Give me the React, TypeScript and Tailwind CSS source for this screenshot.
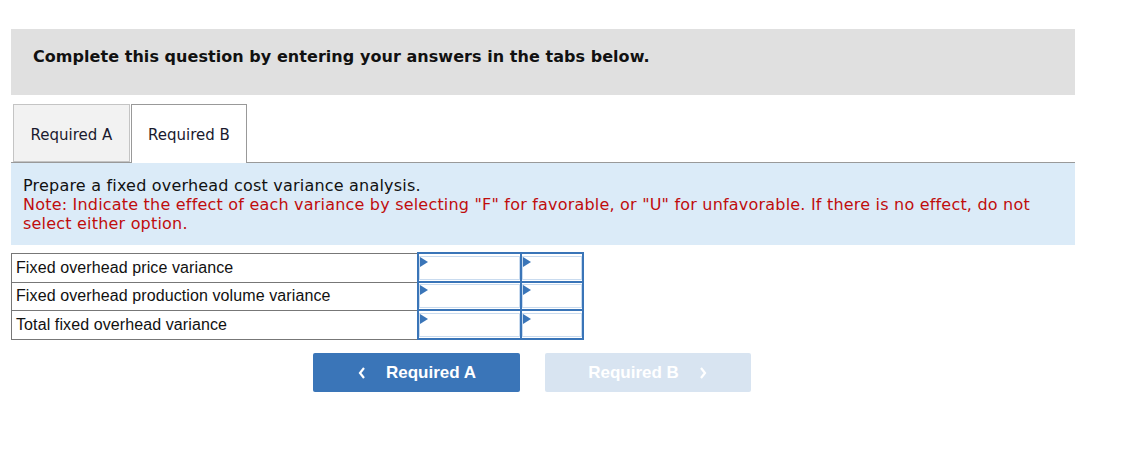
import React from 'react';

const rows = [
  'Fixed overhead price variance',
  'Fixed overhead production volume variance',
  'Total fixed overhead variance',
];

function Flag() {
  return (
    <svg className="absolute left-0 top-0" width="8" height="10" viewBox="0 0 8 10">
      <path d="M0 0 L8 5 L0 10 Z" fill="#3a75b8" />
    </svg>
  );
}

function InputCell({ width }: { width: string }) {
  return (
    <td className={`${width} p-0 border-2 border-[#3a75b8]`}>
      <div className="relative h-[24px] border border-[#c9dbef] bg-white">
        <Flag />
      </div>
    </td>
  );
}

export default function App() {
  return (
    <div className="bg-white min-h-[472px] pt-[29px] pl-[11px]" style={{ fontFamily: '"DejaVu Sans", Verdana, sans-serif' }}>
      <div className="w-[1064px]">
        <div className="h-[66px] bg-[#e0e0e0] pt-[18px] pl-[22px] text-[16px] leading-[19px] font-bold text-[#111] tracking-[0.05px]">
          Complete this question by entering your answers in the tabs below.
        </div>

        <div className="mt-[9px] flex items-end pl-[2px] border-b border-[#999]">
          <div className="w-[117px] h-[58px] bg-[#f2f2f2] border border-[#c4c4c4] flex items-center justify-center text-[15px] text-[#1a1a2e] pt-[4px]">
            Required A
          </div>
          <div className="ml-[1px] -mb-px w-[116px] h-[59px] bg-white border border-b-0 border-[#999] flex items-center justify-center text-[15px] text-[#1a1a2e] pt-[2px]">
            Required B
          </div>
        </div>

        <div className="bg-[#dbebf8] px-[12px] pt-[13px] pb-[12px] text-[16px] leading-[19px] tracking-[0.2px]">
          <div className="text-[#111]">Prepare a fixed overhead cost variance analysis.</div>
          <div className="text-[#c00d0d]">
            Note: Indicate the effect of each variance by selecting "F" for favorable, or "U" for unfavorable. If there is no effect, do not select either option.
          </div>
        </div>
      </div>

      <table className="mt-[7px] border-collapse" style={{ fontFamily: '"Liberation Sans", Arial, sans-serif' }}>
        <tbody>
          {rows.map((r, i) => (
            <tr key={r} className={i === 1 ? 'h-[28px]' : 'h-[29px]'}>
              <td className="w-[406px] border border-[#777] pl-[4px] text-[16px] text-[#111] leading-none tracking-[0.1px]">{r}</td>
              <InputCell width="w-[103px]" />
              <InputCell width="w-[62px]" />
            </tr>
          ))}
        </tbody>
      </table>

      <div className="mt-[13px] flex gap-[25px] pl-[302px]" style={{ fontFamily: '"Liberation Sans", Arial, sans-serif' }}>
        <button className="w-[207px] h-[39px] rounded-[2px] bg-[#3a75b8] text-white text-[17px] font-bold flex items-center justify-center gap-[19px]">
          <svg width="10" height="14" viewBox="0 0 10 14">
            <path d="M7 2 L3 7 L7 12" stroke="white" strokeWidth="2.2" fill="none" />
          </svg>
          <span>Required A</span>
        </button>
        <button className="w-[206px] h-[39px] rounded-[2px] bg-[#d8e4f1] text-white text-[17px] font-bold flex items-center justify-center gap-[19px]">
          <span>Required B</span>
          <svg width="10" height="14" viewBox="0 0 10 14">
            <path d="M3 2 L7 7 L3 12" stroke="white" strokeWidth="2.2" fill="none" />
          </svg>
        </button>
      </div>
    </div>
  );
}
